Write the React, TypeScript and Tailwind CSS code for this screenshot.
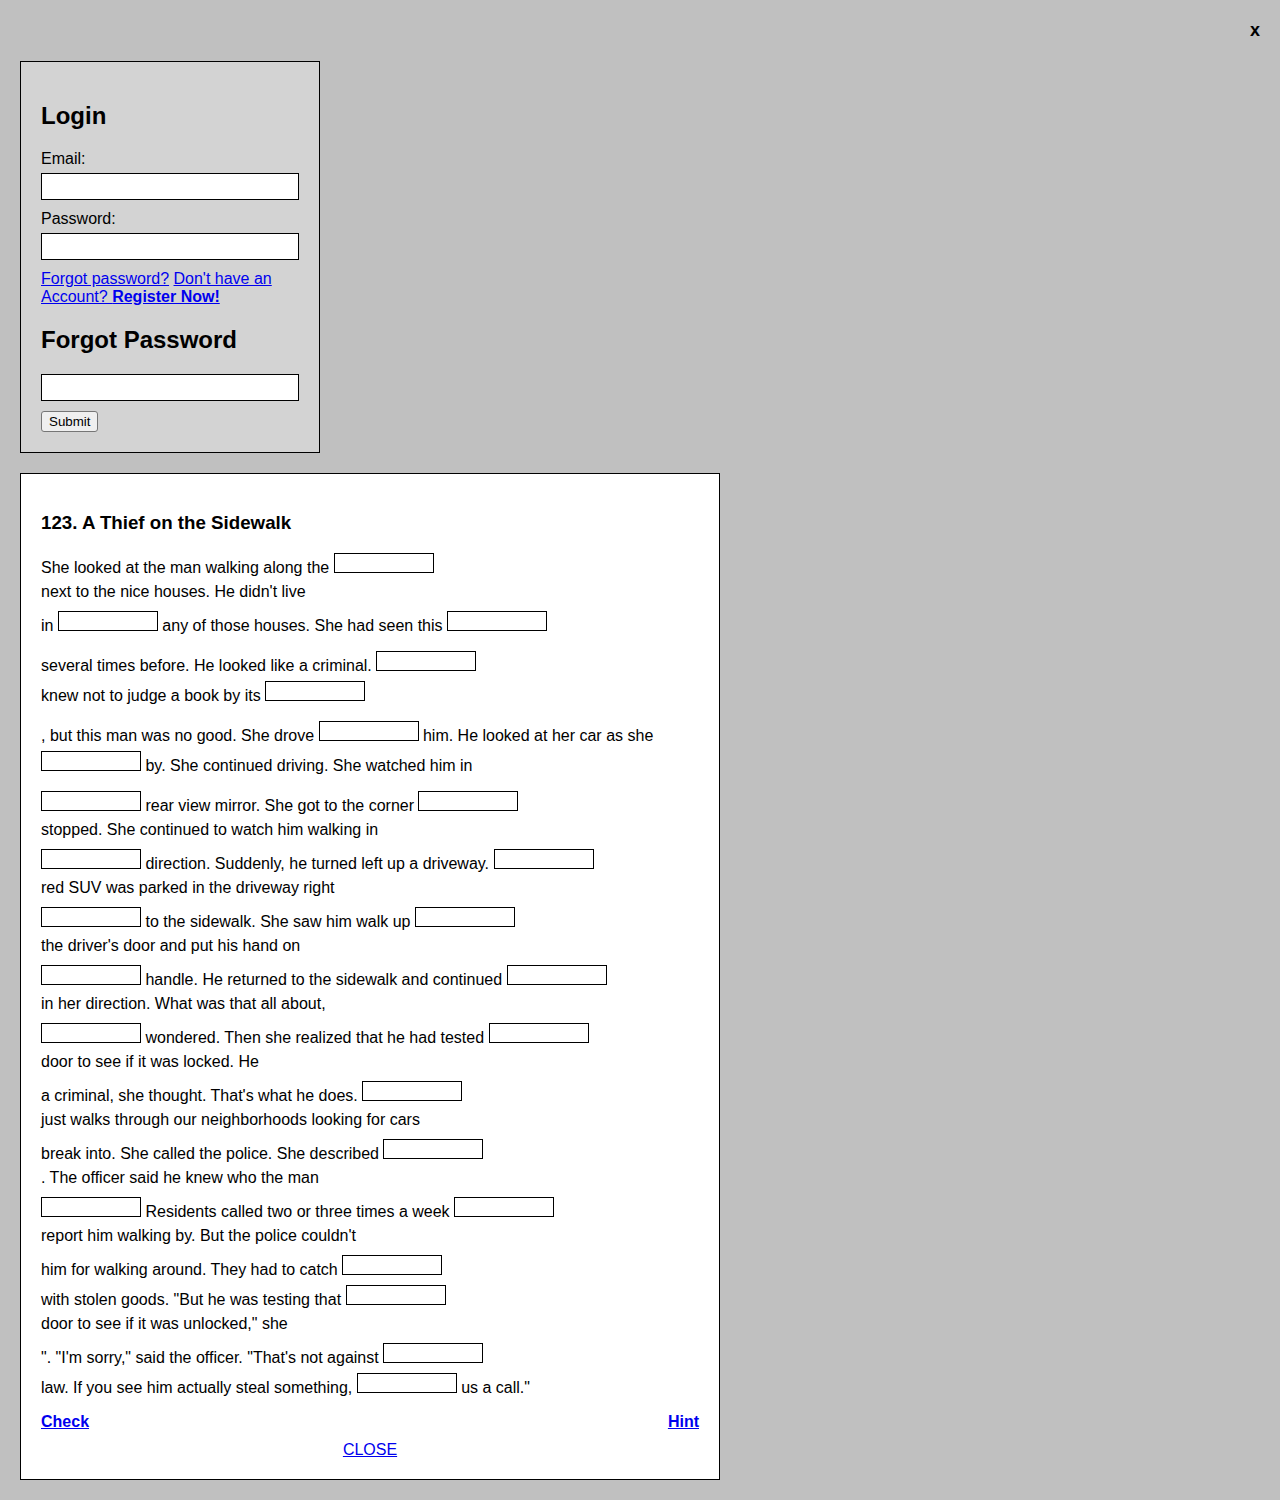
import React from "react";

const lines: { mt: string; text: string }[] = [
  { mt: "mt-[21px]", text: "She looked at the man walking along the []" },
  { mt: "mt-0", text: "next to the nice houses. He didn't live" },
  { mt: "mt-[10px]", text: "in [] any of those houses. She had seen this []" },
  { mt: "mt-[16px]", text: "several times before. He looked like a criminal. []" },
  { mt: "mt-[6px]", text: "knew not to judge a book by its []" },
  { mt: "mt-[16px]", text: ", but this man was no good. She drove [] him. He looked at her car as she" },
  { mt: "mt-[6px]", text: "[] by. She continued driving. She watched him in" },
  { mt: "mt-[16px]", text: "[] rear view mirror. She got to the corner []" },
  { mt: "mt-0", text: "stopped. She continued to watch him walking in" },
  { mt: "mt-[10px]", text: "[] direction. Suddenly, he turned left up a driveway. []" },
  { mt: "mt-0", text: "red SUV was parked in the driveway right" },
  { mt: "mt-[10px]", text: "[] to the sidewalk. She saw him walk up []" },
  { mt: "mt-0", text: "the driver's door and put his hand on" },
  { mt: "mt-[10px]", text: "[] handle. He returned to the sidewalk and continued []" },
  { mt: "mt-0", text: "in her direction. What was that all about," },
  { mt: "mt-[10px]", text: "[] wondered. Then she realized that he had tested []" },
  { mt: "mt-0", text: "door to see if it was locked. He" },
  { mt: "mt-[10px]", text: "a criminal, she thought. That's what he does. []" },
  { mt: "mt-0", text: "just walks through our neighborhoods looking for cars" },
  { mt: "mt-[10px]", text: "break into. She called the police. She described []" },
  { mt: "mt-0", text: ". The officer said he knew who the man" },
  { mt: "mt-[10px]", text: "[] Residents called two or three times a week []" },
  { mt: "mt-0", text: "report him walking by. But the police couldn't" },
  { mt: "mt-[10px]", text: "him for walking around. They had to catch []" },
  { mt: "mt-[6px]", text: 'with stolen goods. "But he was testing that []' },
  { mt: "mt-0", text: 'door to see if it was unlocked," she' },
  { mt: "mt-[10px]", text: '". "I\'m sorry," said the officer. "That\'s not against []' },
  { mt: "mt-[6px]", text: 'law. If you see him actually steal something, [] us a call."' },
];

function Blank() {
  return (
    <input
      type="text"
      className="inline-block w-[100px] h-[20px] -mt-[6px] border border-black bg-white text-[13px] leading-[16px] px-[2px] align-[6px] outline-none"
    />
  );
}

function StoryLine({ text, mt }: { text: string; mt: string }) {
  const parts = text.split("[]");
  return (
    <div className={`${mt} h-[24px] leading-[24px] whitespace-pre`}>
      {parts.map((p, i) => (
        <React.Fragment key={i}>
          {p}
          {i < parts.length - 1 && <Blank />}
        </React.Fragment>
      ))}
    </div>
  );
}

export default function App() {
  return (
    <div className="min-h-screen bg-[#c0c0c0] px-[20px] pb-[20px] text-black text-[16px] font-['Liberation_Sans',Arial,sans-serif]">
      {/* close */}
      <div className="flex justify-end pt-[18px] text-[18px] font-bold leading-[24px]">
        <span className="cursor-pointer">x</span>
      </div>

      {/* Login */}
      <div className="mt-[19px] w-[300px] border border-black bg-[#d3d3d3] p-[20px]">
        <h2 className="mt-[20px] text-[24px] font-bold leading-[28px]">Login</h2>
        <div className="mt-[20px] leading-[18px]">Email:</div>
        <input type="text" className="mt-[5px] block w-full h-[27px] border border-black bg-white px-[2px] text-[13px]" />
        <div className="mt-[10px] leading-[18px]">Password:</div>
        <input type="password" className="mt-[5px] block w-full h-[27px] border border-black bg-white px-[2px] text-[13px]" />
        <div className="mt-[10px] leading-[18px] text-[#0000ee]">
          <a href="#" className="underline">Forgot password?</a>{" "}
          <a href="#" className="underline">
            Don't have an Account? <b>Register Now!</b>
          </a>
        </div>
        <h2 className="mt-[20px] text-[24px] font-bold leading-[28px]">Forgot Password</h2>
        <input type="email" className="mt-[20px] block w-full h-[27px] border border-black bg-white px-[2px] text-[13px]" />
        <button className="mt-[10px] block h-[21px] px-[7px] border border-[#767676] rounded-[3px] bg-[#efefef] text-[13.33px] leading-[15px]">
          Submit
        </button>
      </div>

      {/* Story */}
      <div className="mt-[20px] w-[700px] border border-black bg-white p-[20px]">
        <h3 className="mt-[17px] text-[18.72px] font-bold leading-[24px]">123. A Thief on the Sidewalk</h3>
        {lines.map((l, i) => (
          <StoryLine key={i} text={l.text} mt={l.mt} />
        ))}
        <div className="mt-[13px] flex justify-between leading-[18px] font-bold text-[#0000ee]">
          <a href="#" className="underline">Check</a>
          <a href="#" className="underline">Hint</a>
        </div>
        <div className="mt-[10px] text-center leading-[18px]">
          <a href="#" className="underline text-[#0000ee]">CLOSE</a>
        </div>
      </div>
    </div>
  );
}
